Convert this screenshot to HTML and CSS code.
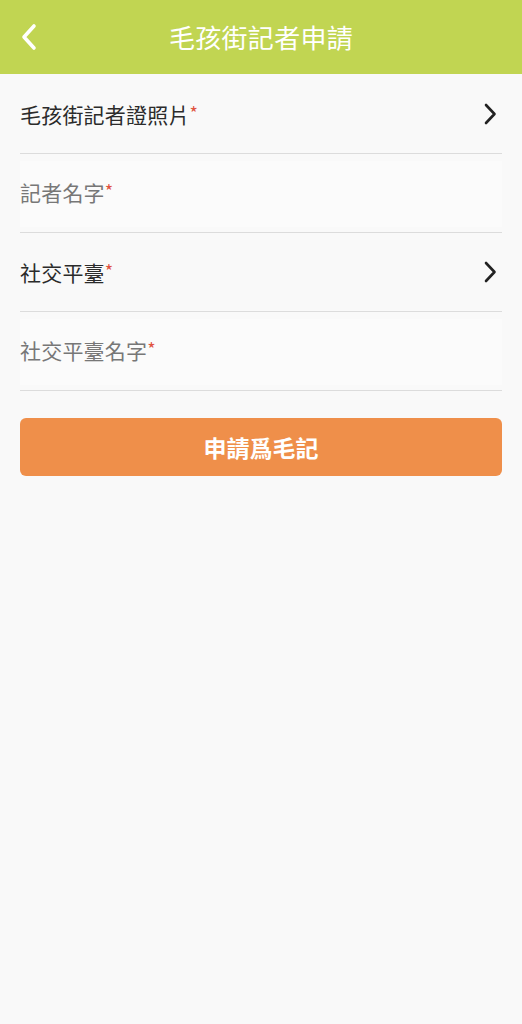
FILE: index.html
```html
<!DOCTYPE html>
<html lang="zh-Hant">
<head>
<meta charset="utf-8">
<title>毛孩街記者申請</title>
<link rel="stylesheet" href="styles.css">
</head>
<body>
<header class="topbar">
  <span class="back">
    <svg width="20" height="28" viewBox="0 0 20 28"><path d="M15 3 L5 14 L15 25" fill="none" stroke="#fff" stroke-width="3.6" stroke-linecap="round" stroke-linejoin="round"/></svg>
  </span>
  <h1 class="title">毛孩街記者申請</h1>
</header>
<main class="form">
  <div class="row">
    <span class="label">毛孩街記者證照片<span class="req">*</span></span>
    <svg class="chev" width="14" height="22" viewBox="0 0 14 22"><path d="M3 2 L11.5 11 L3 20" fill="none" stroke="#222" stroke-width="2.6" stroke-linecap="round" stroke-linejoin="round"/></svg>
  </div>
  <div class="row">
    <div class="input"><span class="placeholder">記者名字<span class="req">*</span></span></div>
  </div>
  <div class="row">
    <span class="label">社交平臺<span class="req">*</span></span>
    <svg class="chev" width="14" height="22" viewBox="0 0 14 22"><path d="M3 2 L11.5 11 L3 20" fill="none" stroke="#222" stroke-width="2.6" stroke-linecap="round" stroke-linejoin="round"/></svg>
  </div>
  <div class="row">
    <div class="input"><span class="placeholder">社交平臺名字<span class="req">*</span></span></div>
  </div>
  <button class="submit">申請爲毛記</button>
</main>
</body>
</html>
```

FILE: styles.css
```css
* { box-sizing: border-box; }
html, body { margin: 0; padding: 0; }
body {
  background: #f9f9f9;
  font-family: "Noto Sans CJK TC", "Noto Sans", sans-serif;
  width: 522px;
  min-height: 1024px;
}
.topbar {
  height: 74px;
  background: #c1d552;
  display: flex;
  align-items: center;
  justify-content: center;
  position: relative;
}
.back {
  position: absolute;
  left: 19px;
  top: 23px;
  display: flex;
}
.title {
  margin: 0;
  color: #fff;
  font-size: 26px;
  font-weight: 400;
  line-height: 1;
  letter-spacing: 0.3px;
}
.form {
  padding: 1px 20px 0;
  display: flex;
  flex-direction: column;
}
.row {
  height: 79px;
  border-bottom: 1px solid #dcdcdc;
  display: flex;
  align-items: center;
  justify-content: space-between;
}
.label {
  font-size: 21px;
  color: #2b2b2b;
  line-height: 1;
  letter-spacing: 0.2px;
}
.placeholder {
  font-size: 21px;
  color: #777;
  line-height: 1;
  letter-spacing: 0.2px;
}
.req {
  color: #e0523f;
  font-size: 18px;
  vertical-align: 3px;
}
.input {
  width: 100%;
  height: 66px;
  margin-top: 2px;
  background: #fbfbfb;
  display: flex;
  align-items: center;
  padding-bottom: 4px;
}
.chev { margin-right: 5px; }
.submit {
  margin-top: 27px;
  height: 58px;
  border: none;
  border-radius: 6px;
  background: #ef8f4a;
  color: #fff;
  font-family: "Noto Sans CJK TC", "Noto Sans", sans-serif;
  font-size: 23px;
  font-weight: 700;
  letter-spacing: 0;
}
```
